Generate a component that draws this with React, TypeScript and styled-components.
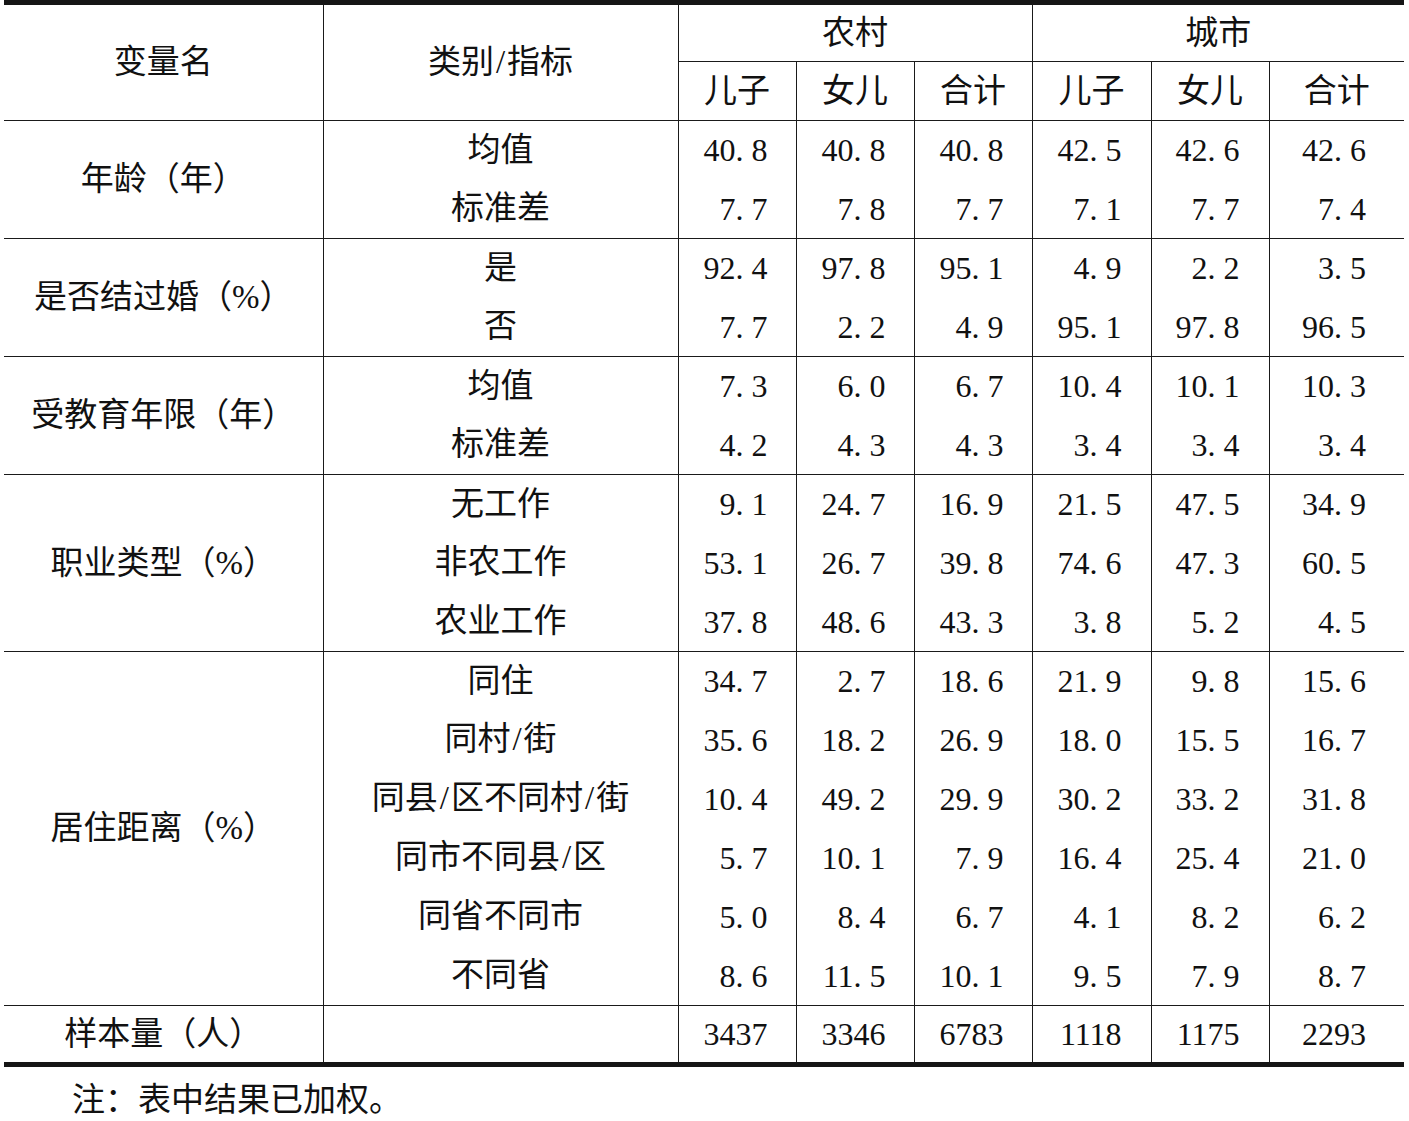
import React from "react";
import styled, { createGlobalStyle } from "styled-components";

const Global = createGlobalStyle`
  html, body { margin: 0; padding: 0; background: #fff; }
  body {
    font-family: "Liberation Serif", "Noto Sans CJK SC", serif;
    color: #111;
  }
`;

const Page = styled.div`
  padding: 0 5px 0 4px;
  width: 1400px;
`;

const Table = styled.table`
  width: 1400px;
  table-layout: fixed;
  border-collapse: collapse;
  border-top: 5px solid #151515;
  border-bottom: 5px solid #151515;
`;

const Col = styled.col<{ $w: number }>`
  width: ${(p) => p.$w}px;
`;

const HeadCell = styled.th<{ $right?: boolean; $bottom?: boolean; $h: number }>`
  font-weight: normal;
  font-size: 33px;
  height: ${(p) => p.$h}px;
  padding: 0;
  text-align: center;
  vertical-align: middle;
  border-right: ${(p) => (p.$right ? "1px solid #1a1a1a" : "none")};
  border-bottom: ${(p) => (p.$bottom ? "1px solid #1a1a1a" : "none")};
  line-height: 1;
  white-space: nowrap;
`;

const NameCell = styled.td`
  font-size: 33px;
  text-align: center;
  vertical-align: middle;
  padding: 0;
  border-right: 1px solid #1a1a1a;
  border-bottom: 1px solid #1a1a1a;
  line-height: 1;
  white-space: nowrap;
`;

const LabelCell = styled.td<{ $last: boolean; $h: number }>`
  font-size: 33px;
  text-align: center;
  vertical-align: middle;
  height: ${(p) => p.$h}px;
  padding: 0;
  border-right: 1px solid #1a1a1a;
  border-bottom: ${(p) => (p.$last ? "1px solid #1a1a1a" : "none")};
  line-height: 1;
  white-space: nowrap;
`;

const NumCell = styled.td<{ $last: boolean; $pad: number; $right: boolean }>`
  font-size: 32px;
  text-align: right;
  vertical-align: middle;
  padding: 0 ${(p) => p.$pad}px 0 0;
  border-right: ${(p) => (p.$right ? "1px solid #1a1a1a" : "none")};
  border-bottom: ${(p) => (p.$last ? "1px solid #1a1a1a" : "none")};
  line-height: 1;
  white-space: nowrap;
`;

const Dot = styled.span`
  margin-right: 8px;
`;

const Slash = styled.span`
  margin: 0 2px;
`;

const Note = styled.div`
  font-size: 33px;
  line-height: 40px;
  margin-top: 13px;
  padding-left: 68px;
`;

type Line = { label: string; values: string[] };
type Group = { name: string; lines: Line[] };

const groups: Group[] = [
  {
    name: "年龄（年）",
    lines: [
      { label: "均值", values: ["40.8", "40.8", "40.8", "42.5", "42.6", "42.6"] },
      { label: "标准差", values: ["7.7", "7.8", "7.7", "7.1", "7.7", "7.4"] },
    ],
  },
  {
    name: "是否结过婚（%）",
    lines: [
      { label: "是", values: ["92.4", "97.8", "95.1", "4.9", "2.2", "3.5"] },
      { label: "否", values: ["7.7", "2.2", "4.9", "95.1", "97.8", "96.5"] },
    ],
  },
  {
    name: "受教育年限（年）",
    lines: [
      { label: "均值", values: ["7.3", "6.0", "6.7", "10.4", "10.1", "10.3"] },
      { label: "标准差", values: ["4.2", "4.3", "4.3", "3.4", "3.4", "3.4"] },
    ],
  },
  {
    name: "职业类型（%）",
    lines: [
      { label: "无工作", values: ["9.1", "24.7", "16.9", "21.5", "47.5", "34.9"] },
      { label: "非农工作", values: ["53.1", "26.7", "39.8", "74.6", "47.3", "60.5"] },
      { label: "农业工作", values: ["37.8", "48.6", "43.3", "3.8", "5.2", "4.5"] },
    ],
  },
  {
    name: "居住距离（%）",
    lines: [
      { label: "同住", values: ["34.7", "2.7", "18.6", "21.9", "9.8", "15.6"] },
      { label: "同村/街", values: ["35.6", "18.2", "26.9", "18.0", "15.5", "16.7"] },
      { label: "同县/区不同村/街", values: ["10.4", "49.2", "29.9", "30.2", "33.2", "31.8"] },
      { label: "同市不同县/区", values: ["5.7", "10.1", "7.9", "16.4", "25.4", "21.0"] },
      { label: "同省不同市", values: ["5.0", "8.4", "6.7", "4.1", "8.2", "6.2"] },
      { label: "不同省", values: ["8.6", "11.5", "10.1", "9.5", "7.9", "8.7"] },
    ],
  },
];

const samples = ["3437", "3346", "6783", "1118", "1175", "2293"];
const pads = [28, 28, 28, 29, 29, 38];
const colWidths = [319, 355, 118, 118, 118, 119, 118, 135];

function Num({ v }: { v: string }) {
  const i = v.indexOf(".");
  if (i < 0) return <>{v}</>;
  return (
    <>
      {v.slice(0, i)}
      <Dot>.</Dot>
      {v.slice(i + 1)}
    </>
  );
}

function Label({ t }: { t: string }) {
  const parts = t.split("/");
  return (
    <>
      {parts.map((p, i) => (
        <React.Fragment key={i}>
          {i > 0 && <Slash>/</Slash>}
          {p}
        </React.Fragment>
      ))}
    </>
  );
}

export default function App() {
  return (
    <Page>
      <Global />
      <Table>
        <colgroup>
          {colWidths.map((w, i) => (
            <Col key={i} $w={w} />
          ))}
        </colgroup>
        <thead>
          <tr>
            <HeadCell rowSpan={2} $right $bottom $h={56}>
              变量名
            </HeadCell>
            <HeadCell rowSpan={2} $right $bottom $h={56}>
              <Label t="类别/指标" />
            </HeadCell>
            <HeadCell colSpan={3} $right $bottom $h={56}>
              农村
            </HeadCell>
            <HeadCell colSpan={3} $bottom $h={56}>
              城市
            </HeadCell>
          </tr>
          <tr>
            {["儿子", "女儿", "合计", "儿子", "女儿", "合计"].map((t, i) => (
              <HeadCell key={i} $right={i < 5} $bottom $h={58}>
                {t}
              </HeadCell>
            ))}
          </tr>
        </thead>
        <tbody>
          {groups.map((g) =>
            g.lines.map((l, li) => {
              const last = li === g.lines.length - 1;
              return (
                <tr key={g.name + l.label}>
                  {li === 0 && <NameCell rowSpan={g.lines.length}>{g.name}</NameCell>}
                  <LabelCell $last={last} $h={li === 0 ? 58 : 59}>
                    <Label t={l.label} />
                  </LabelCell>
                  {l.values.map((v, vi) => (
                    <NumCell key={vi} $last={last} $pad={pads[vi]} $right={vi < 5}>
                      <Num v={v} />
                    </NumCell>
                  ))}
                </tr>
              );
            })
          )}
          <tr>
            <NameCell>样本量（人）</NameCell>
            <LabelCell $last={false} $h={56} />
            {samples.map((v, vi) => (
              <NumCell key={vi} $last={false} $pad={pads[vi]} $right={vi < 5}>
                {v}
              </NumCell>
            ))}
          </tr>
        </tbody>
      </Table>
      <Note>注：表中结果已加权。</Note>
    </Page>
  );
}
